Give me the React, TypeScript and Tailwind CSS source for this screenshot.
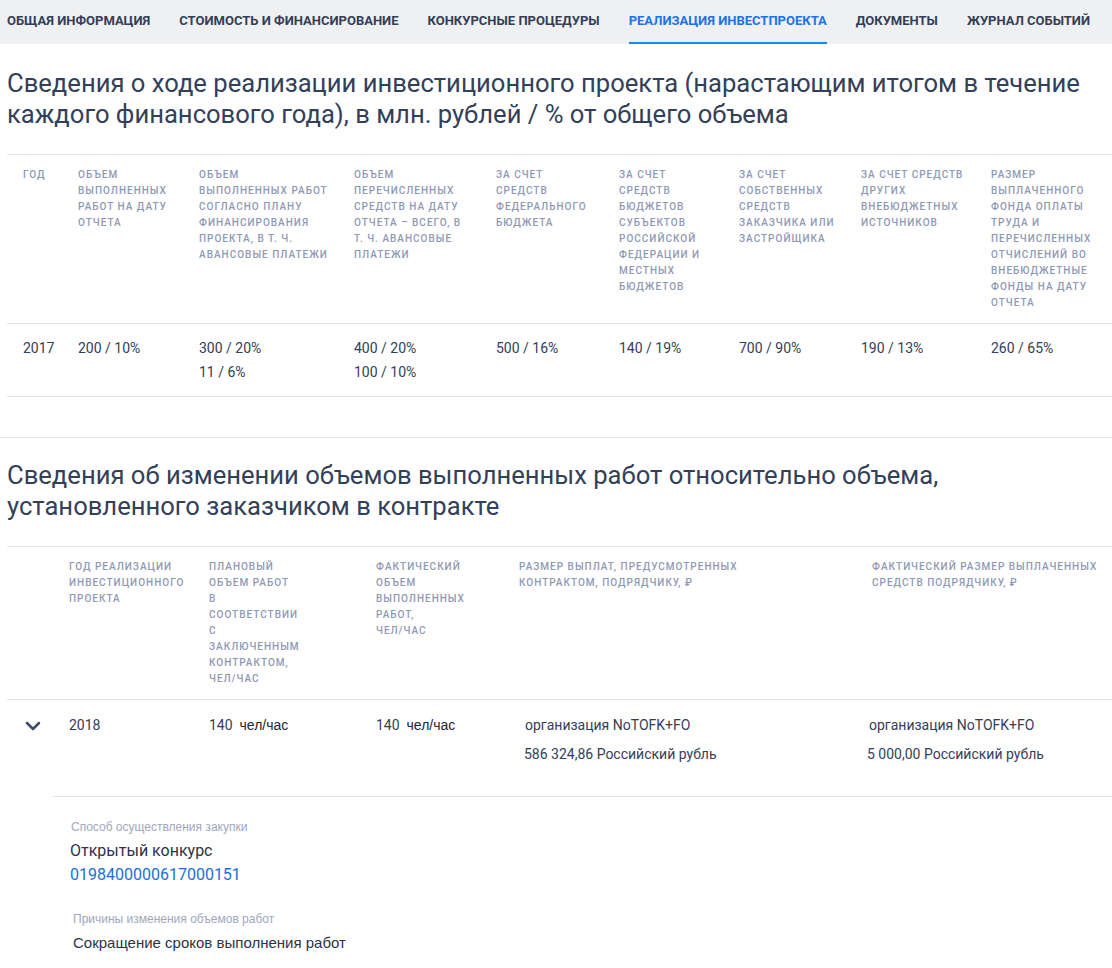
import { ChevronDown } from 'lucide-react'

const TABS = [
  { label: 'Общая информация' },
  { label: 'Стоимость и финансирование' },
  { label: 'Конкурсные процедуры' },
  { label: 'Реализация инвестпроекта', active: true },
  { label: 'Документы' },
  { label: 'Журнал событий' },
]

const PROGRESS_HEAD = [
  'Год',
  'Объем выполненных работ на дату отчета',
  'Объем выполненных работ согласно плану финансирования проекта, в т. ч. авансовые платежи',
  'Объем перечисленных средств на дату отчета – всего, в т. ч. авансовые платежи',
  'За счет средств федерального бюджета',
  'За счет средств бюджетов субъектов Российской Федерации и местных бюджетов',
  'За счет собственных средств заказчика или застройщика',
  'За счет средств других внебюджетных источников',
  'Размер выплаченного фонда оплаты труда и перечисленных отчислений во внебюджетные фонды на дату отчета',
]

const PROGRESS_ROW: string[][] = [
  ['2017'],
  ['200 / 10%'],
  ['300 / 20%', '11 / 6%'],
  ['400 / 20%', '100 / 10%'],
  ['500 / 16%'],
  ['140 / 19%'],
  ['700 / 90%'],
  ['190 / 13%'],
  ['260 / 65%'],
]

const headCls = 'pl-4 pr-2 pt-3 pb-3 text-[10px] leading-4 tracking-[1px] font-medium uppercase text-[#8e99b3]'
const cols1 = 'grid grid-cols-[55px_121px_155px_142px_123px_120px_122px_130px_137px]'
const cols2 = 'grid grid-cols-[140px_167px_143px_353px_1fr]'
const arial = 'font-[family-name:"Liberation_Sans",Arial,sans-serif]'

export default function App() {
  return (
    <div className="min-h-[968px] bg-white font-[family-name:Roboto,sans-serif] text-[#334059]">
      <nav className="flex h-[44px] gap-[29px] overflow-hidden bg-[#eff0f2] pl-[7px]">
        {TABS.map((t) => (
          <div
            key={t.label}
            className={
              'flex shrink-0 items-center whitespace-nowrap border-b-2 text-[13px] font-bold uppercase ' +
              (t.active ? 'border-[#1e88e5] text-[#1a73e8]' : 'border-transparent text-[#343e56]')
            }
          >
            {t.label}
          </div>
        ))}
      </nav>

      <section className="border-b border-[#e3e5ed] pb-10 pl-[7px]">
        <h2 className="pt-6 text-[25.6px] leading-[31px] font-normal">
          Сведения о ходе реализации инвестиционного проекта (нарастающим итогом в течение каждого финансового года), в млн. рублей / % от общего объема
        </h2>
        <div className="mt-6 border-t border-[#e3e5ed]">
          <div className={cols1 + ' border-b border-[#e3e5ed]'}>
            {PROGRESS_HEAD.map((h) => (
              <div key={h} className={headCls}>{h}</div>
            ))}
          </div>
          <div className={cols1 + ' border-b border-[#e3e5ed]'}>
            {PROGRESS_ROW.map((c, i) => (
              <div key={i} className="py-3 pl-4 pr-2 text-[14px] leading-6">
                {c.map((v) => <div key={v}>{v}</div>)}
              </div>
            ))}
          </div>
        </div>
      </section>

      <section className="pl-[7px]">
        <h2 className="pt-[22px] pr-4 text-[25.6px] leading-[31px] font-normal">
          Сведения об изменении объемов выполненных работ относительно объема, установленного заказчиком в контракте
        </h2>
        <div className="mt-6 border-t border-[#e3e5ed]">
          <div className="flex border-b border-[#e3e5ed]">
            <div className="w-[46px] shrink-0" />
            <div className={cols2 + ' flex-1'}>
              <div className={headCls}>Год реализации инвестиционного проекта</div>
              <div className={headCls}>
                <div className="w-[90px]">Плановый объем работ в соответствии с заключенным контрактом, <span className="whitespace-nowrap">чел/час</span></div>
              </div>
              <div className={headCls}>
                <div className="w-[90px]">Фактический объем выполненных работ, <span className="whitespace-nowrap">чел/час</span></div>
              </div>
              <div className={headCls}><div className="w-[236px]">Размер выплат, предусмотренных контрактом, подрядчику, ₽</div></div>
              <div className={headCls}>Фактический размер выплаченных средств подрядчику, ₽</div>
            </div>
          </div>

          <div className="flex">
            <div className="w-[46px] shrink-0 pl-[14px] pt-[14px]">
              <ChevronDown size={24} strokeWidth={2.5} className="text-[#3d4a63]" />
            </div>
            <div className="flex-1">
              <div className={cols2 + ' border-b border-[#e3e5ed] text-[14px] leading-6'}>
                <div className="pt-[13px] pl-4">2018</div>
                <div className="pt-[13px] pl-4 whitespace-pre">140  <span className={arial + ' text-[#1d2433]'}>чел/час</span></div>
                <div className="pt-[13px] pl-4 whitespace-pre">140  <span className={arial + ' text-[#1d2433]'}>чел/час</span></div>
                <div className="pt-[13px] pb-[30px] pl-[22px]">
                  <div>организация NoTOFK+FO</div>
                  <div className="mt-[5px] -ml-px">586 324,86 Российский рубль</div>
                </div>
                <div className="pt-[13px] pl-[13px]">
                  <div>организация NoTOFK+FO</div>
                  <div className="mt-[5px] -ml-[2px]">5 000,00 Российский рубль</div>
                </div>
              </div>

              <div className="pt-[22px] pb-4">
                <div className="pl-[18px]">
                  <div className={arial + ' text-[12px] leading-4 text-[#a0a7bd]'}>Способ осуществления закупки</div>
                  <div className="mt-1 -ml-px text-[16px] leading-6 text-[#2b3348]">Открытый конкурс</div>
                  <a href="#" className="-ml-px block text-[16px] leading-6 text-[#1a6fd8]">0198400000617000151</a>
                </div>
                <div className="mt-6 pl-[20px]">
                  <div className={arial + ' text-[12px] leading-4 text-[#a0a7bd]'}>Причины изменения объемов работ</div>
                  <div className={arial + ' mt-1 text-[15px] leading-6 text-[#2b3348]'}>Сокращение сроков выполнения работ</div>
                </div>
              </div>
            </div>
          </div>
        </div>
      </section>
    </div>
  )
}
